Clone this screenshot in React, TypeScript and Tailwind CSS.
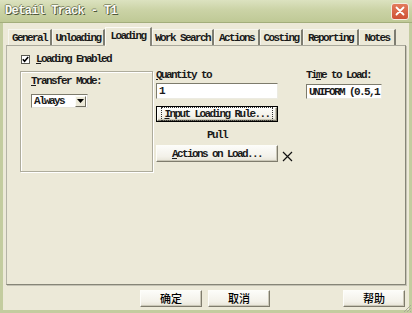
import React from "react";

const txt = "text-[11px] leading-[12px] tracking-[-1.6px] whitespace-nowrap font-bold text-[#1a1a1a]";

function U({ children }: { children: React.ReactNode }) {
  return <span className="underline underline-offset-[1px] decoration-1">{children}</span>;
}

function Btn({ children, className = "" }: { children: React.ReactNode; className?: string }) {
  return (
    <div
      className={
        "flex items-center justify-center bg-[linear-gradient(#fcfcf9,#f3f1e9_70%,#e7e4d7)] border border-t-[#fdfdf9] border-l-[#fdfdf9] border-r-[#7f7c6d] border-b-[#7f7c6d] shadow-[inset_-1px_-1px_0_#cbc8b8] " +
        className
      }
    >
      {children}
    </div>
  );
}

const tabs = [
  { label: "General", w: "w-[44px]" },
  { label: "Unloading", w: "w-[53px]" },
  { label: "Loading", w: "w-[47px]", active: true },
  { label: "Work Search", w: "w-[62px]" },
  { label: "Actions", w: "w-[46px]" },
  { label: "Costing", w: "w-[43px]" },
  { label: "Reporting", w: "w-[56px]" },
  { label: "Notes", w: "w-[37px]" },
];

export default function App() {
  return (
    <div className="relative w-[412px] h-[313px] flex flex-col bg-[#ece9d8] font-['Liberation_Mono',monospace] text-black overflow-hidden">
      {/* Title bar */}
      <div className="h-[23px] shrink-0 flex items-center justify-between pl-[5px] pr-[3px] bg-[linear-gradient(#dce2c0,#cbd3a6_45%,#bfc996)] border-b border-[#a3ae7c]">
        <span className="text-[12px] tracking-[-0.6px] font-bold leading-none text-[#fafaf4] [text-shadow:1px_1px_0_#4f583a,-1px_0_0_#7f8865,0_-1px_0_#8a9270]">
          Detail Track - T1
        </span>
        <div className="w-[18px] h-[17px] rounded-[3px] bg-[linear-gradient(#e27a5c,#cf5136)] border border-[#f3ebe2] flex items-center justify-center">
          <svg width="10" height="10" viewBox="0 0 10 10">
            <path d="M1.5 1.5 L8.5 8.5 M8.5 1.5 L1.5 8.5" stroke="#ffffff" strokeWidth="1.8" strokeLinecap="round" />
          </svg>
        </div>
      </div>

      {/* Body */}
      <div className="flex-1 flex flex-col border-x-[3px] border-b-[3px] border-[#c3cc9f] pt-[4px]">
        {/* Tabs */}
        <div className="ml-[5px] h-[18px] flex items-end">
          {tabs.map((t) =>
            t.active ? (
              <div
                key={t.label}
                className={`${t.w} relative z-10 -mb-px h-[19px] bg-[#ece9d8] border-l border-t border-[#fbfaf4] border-r-2 border-r-[#86857a] flex items-start justify-center pt-[2px] ${txt}`}
              >
                {t.label}
              </div>
            ) : (
              <div
                key={t.label}
                className={`${t.w} h-[16px] border-t border-l border-[#f6f5ee] border-r-2 border-r-[#7e7d71] flex items-center justify-center ${txt}`}
              >
                {t.label}
              </div>
            )
          )}
        </div>

        {/* Panel */}
        <div className="ml-[3px] w-[400px] h-[240px] shrink-0 border border-t-[#a9a89b] border-l-[#b4b3a6] border-r-[#868577] border-b-[#868577] shadow-[1px_1px_0_#c4c2b4] flex flex-col pl-[13px] pt-[8px]">
          {/* Checkbox */}
          <div className="h-[10px] flex items-center ml-[1px]">
            <div className="w-[9px] h-[9px] bg-white border border-[#5a5a52] flex items-center justify-center">
              <svg width="7" height="7" viewBox="0 0 7 7">
                <path d="M0.8 3.2 L2.6 5.2 L6.2 0.9" stroke="#000" strokeWidth="1.6" fill="none" />
              </svg>
            </div>
            <span className={`ml-[6px] ${txt}`}>
              <U>L</U>oading Enabled
            </span>
          </div>

          {/* Main row */}
          <div className="mt-[5px] flex items-start">
            {/* Group box */}
            <div className="mt-[2px] w-[133px] h-[101px] border border-[#aeac9c] shadow-[inset_1px_1px_0_#ffffff,1px_1px_0_#ffffff] pl-[10px] pt-[3px] flex flex-col items-start">
              <span className={txt}>
                <U>T</U>ransfer Mode:
              </span>
              <div className="mt-[7px] w-[57px] h-[14px] bg-white border border-t-[#7d7b6c] border-l-[#7d7b6c] border-r-[#e4e2d8] border-b-[#e4e2d8] flex items-center pl-[2px]">
                <span className={`flex-1 ${txt}`}>Always</span>
                <div className="w-[11px] h-[11px] mr-px bg-[#ece9d8] border border-t-[#fbfbf6] border-l-[#fbfbf6] border-r-[#6f6d60] border-b-[#6f6d60] flex items-center justify-center">
                  <svg width="7" height="4" viewBox="0 0 7 4">
                    <path d="M0 0 L7 0 L3.5 4 Z" fill="#000" />
                  </svg>
                </div>
              </div>
            </div>

            {/* Middle column */}
            <div className="ml-[3px] w-[150px] flex flex-col items-start">
              <span className={`h-[12px] ${txt}`}>
                <U>Q</U>uantity to
              </span>
              <div className={`mt-[2px] w-[122px] h-[16px] bg-white border border-t-[#7d7b6c] border-l-[#7d7b6c] border-r-[#ecebe2] border-b-[#ecebe2] flex items-center pl-[2px] ${txt}`}>
                1
              </div>
              <div className="mt-[7px] w-[122px] h-[16px] border border-black flex">
                <Btn className="flex-1">
                  <span className={`px-[2px] outline outline-1 outline-dotted outline-[#333] ${txt}`}>
                    <U>I</U>nput Loading Rule...
                  </span>
                </Btn>
              </div>
              <div className={`mt-[7px] w-[122px] text-center ${txt}`}>Pull</div>
              <div className="mt-[4px] flex items-center">
                <Btn className={`w-[122px] h-[17px] ${txt}`}>
                  <span>
                    <U>A</U>ctions on Load...
                  </span>
                </Btn>
                <svg className="ml-[4px] mt-[6px]" width="11" height="11" viewBox="0 0 11 11">
                  <path d="M1 1 L10 10 M10 1 L1 10" stroke="#111" strokeWidth="1.2" />
                </svg>
              </div>
            </div>

            {/* Right column */}
            <div className="w-[76px] flex flex-col items-start">
              <span className={`h-[12px] ${txt}`}>
                Ti<U>m</U>e to Load:
              </span>
              <div className={`mt-[3px] w-[76px] h-[15px] bg-white border border-t-[#7d7b6c] border-l-[#7d7b6c] border-r-[#ecebe2] border-b-[#ecebe2] flex items-center pl-[2px] overflow-hidden ${txt}`}>
                UNIFORM (0.5,1
              </div>
            </div>
          </div>
        </div>

        {/* Buttons */}
        <div className="mt-[5px] h-[17px] flex pl-[137px] font-['Noto_Sans_CJK_SC','Liberation_Sans',sans-serif] text-[11px] leading-none font-medium">
          <Btn className="w-[62px] h-[17px]">确定</Btn>
          <Btn className="ml-[6px] w-[62px] h-[17px]">取消</Btn>
          <Btn className="ml-[73px] w-[62px] h-[17px]">帮助</Btn>
        </div>
      </div>

      {/* Size grip */}
      <svg className="absolute right-0 bottom-0" width="10" height="10" viewBox="0 0 10 10">
        <path d="M9 2 L2 9 M9 5 L5 9 M9 8 L8 9" stroke="#a9a795" strokeWidth="1" />
      </svg>
    </div>
  );
}
